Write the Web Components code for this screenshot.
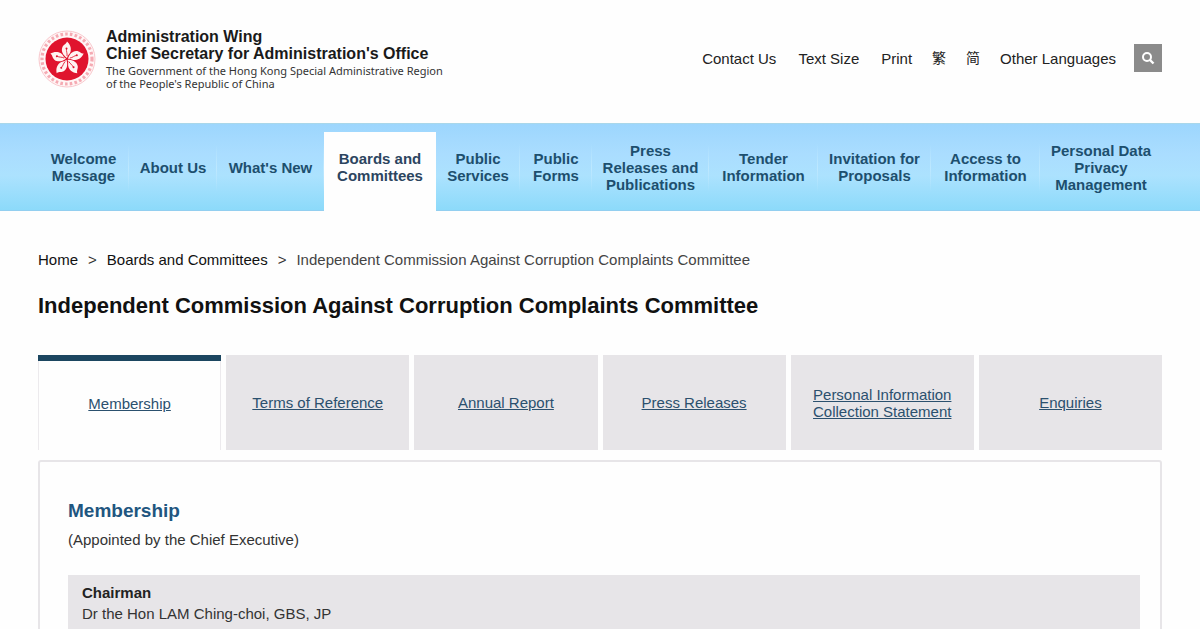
<!DOCTYPE html>
<html lang="en">
<head>
<meta charset="utf-8">
<title>Independent Commission Against Corruption Complaints Committee</title>
<style>
body { margin: 0; background: #fefefe; color: #333; font: 15px/17px "Liberation Sans", "Noto Sans CJK TC", Arial, sans-serif; }
</style>
</head>
<body>
<aw-page></aw-page>

<template id="t-emblem">
<style>
:host { display: block; flex: none; width: 58px; height: 58px; }
svg { display: block; width: 100%; height: 100%; }
</style>
<svg viewBox="0 0 58 58" role="img" aria-label="Regional emblem">
  <circle cx="29" cy="29" r="28" fill="#fff6f6" stroke="#f9c9ce" stroke-width="1"/>
  <circle cx="29" cy="29" r="25" fill="none" stroke="#f5aab3" stroke-width="3.2" stroke-dasharray="2.6 2.2"/>
  <circle cx="29" cy="29" r="21.5" fill="#e0142e"/>
  <defs>
    <g id="petal">
      <path d="M29 28C25.500 25.500 22.800 21.500 24.300 17.500C25.300 14.500 28 14.500 29 11.500C31.800 14 33.600 17.500 32.600 21.500C32 24 29.500 25 29 28Z" fill="#fff4f2"/>
      <path d="M29 26C29.500 23 28 21.500 28.600 18.500" fill="none" stroke="#e0142e" stroke-width=".8"/>
      <circle cx="28.500" cy="18.500" r="1" fill="#e0142e"/>
    </g>
  </defs>
  <use href="#petal"/>
  <use href="#petal" transform="rotate(72 29 29)"/>
  <use href="#petal" transform="rotate(144 29 29)"/>
  <use href="#petal" transform="rotate(216 29 29)"/>
  <use href="#petal" transform="rotate(288 29 29)"/>
</svg>
</template>

<template id="t-header">
<style>
:host { display: flex; align-items: center; justify-content: space-between; box-sizing: border-box; padding: 28px 38px 33px; }
.brand { display: flex; align-items: center; gap: 10px; color: #1a1a1a; text-decoration: none; }
.names { display: grid; }
strong { font-size: 16px; line-height: 17px; }
.gov { font: 11px/13px "Noto Sans", sans-serif; color: #333; }
.names .gov:first-of-type { margin-top: 2px; }
nav { display: flex; align-items: center; gap: 20px; padding-bottom: 2px; }
nav a { color: #222; text-decoration: none; }
.wide { margin-right: 2px; }
[lang] { font-size: 14px; }
button { display: grid; place-items: center; width: 28px; height: 28px; padding: 0; border: 0; background: #8b8b8b; margin-left: -2px; }
svg { width: 14px; height: 14px; display: block; }
</style>
<a class="brand" href="#home">
  <aw-emblem></aw-emblem>
  <span class="names">
    <strong>Administration Wing</strong>
    <strong>Chief Secretary for Administration's Office</strong>
    <span class="gov">The Government of the Hong Kong Special Administrative Region</span>
    <span class="gov">of the People's Republic of China</span>
  </span>
</a>
<nav aria-label="Tools">
  <a class="wide" href="#contact">Contact Us</a>
  <a class="wide" href="#size">Text Size</a>
  <a href="#print">Print</a>
  <a href="#tc" lang="zh-Hant">繁</a>
  <a href="#sc" lang="zh-Hans">简</a>
  <a href="#lang">Other Languages</a>
  <button type="button" aria-label="Search"><svg viewBox="0 0 14 14" fill="none" stroke="#fff" stroke-width="2"><circle cx="6" cy="6" r="4"/><path d="M9 9l3.500 3.500" stroke-width="2.400"/></svg></button>
</nav>
</template>

<template id="t-nav">
<style>
:host { display: block; padding: 8px 38px 0; background: linear-gradient(#9dd6fd, #aaddff 35%, #ace2fe 60%, #8cdafa); border-top: 1px solid #a9d7ea; border-bottom: 1px solid #93cff0; }
nav { display: grid; grid-template-columns: 91fr 88fr 107fr 112fr 84fr 72fr 117fr 109fr 113fr 109fr 122fr; min-height: 78px; }
</style>
<nav aria-label="Main"><slot></slot></nav>
</template>

<template id="t-nav-item">
<style>
:host { display: flex; position: relative; }
a { flex: 1; display: flex; align-items: center; justify-content: center; box-sizing: border-box; padding: 0 10px 8px; text-align: center; font-weight: 700; color: #1d4f6e; text-decoration: none; }
:host(:not([current]):not([last]))::after { content: ""; position: absolute; right: 0; top: 12px; height: 48px; width: 1px; background: linear-gradient(#b5e1ff00, #bde8ff, #b5e1ff00); }
:host([current]) { background: #fefefe; margin-bottom: -1px; }
:host([current]) a { padding-bottom: 9px; color: #2c4560; }
</style>
<a href="#section"><span><slot></slot></span></a>
</template>

<template id="t-crumbs">
<style>
:host { display: block; }
nav { display: flex; flex-wrap: wrap; gap: 10px; }
a { color: #111; text-decoration: none; }
[aria-current] { color: #444; }
</style>
<nav aria-label="Breadcrumb">
  <a href="#home">Home</a><span>&gt;</span>
  <a href="#boards">Boards and Committees</a><span>&gt;</span>
  <span aria-current="page">Independent Commission Against Corruption Complaints Committee</span>
</nav>
</template>

<template id="t-tab">
<style>
:host { display: flex; min-height: 95px; background: #e7e5e8; }
a { flex: 1; display: flex; align-items: center; justify-content: center; padding: 0 16px; text-align: center; color: #2b506e; text-decoration: underline; }
:host([current]) { box-sizing: border-box; border-top: 6px solid #1c4660; background: #fefefe; }
:host([current]) a { padding-bottom: 4px; border: solid #eceaed; border-width: 0 1px; }
</style>
<a href="#tab"><slot></slot></a>
</template>

<template id="t-member">
<style>
:host { display: block; padding: 7px 14px 14px; background: #e7e5e8; line-height: 21px; }
strong, span { display: block; }
strong { color: #222; }
</style>
<strong><slot name="role"></slot></strong>
<span><slot></slot></span>
</template>

<template id="t-page">
<style>
:host { display: block; height: 100vh; overflow: hidden; }
main { padding: 40px 38px 0; }
h1 { margin: 24px 0 0; font-size: 22px; line-height: 28px; color: #111; }
.tabs { display: grid; grid-template-columns: repeat(6, 1fr); gap: 5px; margin-top: 35px; }
section { margin-top: 10px; padding: 38px 20px 30px 28px; border: 2px solid #e7e5e8; border-radius: 3px; }
h2 { margin: 0; font-size: 19px; line-height: 22px; color: #1f5680; }
p { margin: 9px 0 27px; }
</style>
<aw-header></aw-header>
<aw-nav>
  <aw-nav-item>Welcome Message</aw-nav-item>
  <aw-nav-item>About Us</aw-nav-item>
  <aw-nav-item>What's New</aw-nav-item>
  <aw-nav-item current>Boards and Committees</aw-nav-item>
  <aw-nav-item>Public Services</aw-nav-item>
  <aw-nav-item>Public Forms</aw-nav-item>
  <aw-nav-item>Press Releases and Publications</aw-nav-item>
  <aw-nav-item>Tender Information</aw-nav-item>
  <aw-nav-item>Invitation for Proposals</aw-nav-item>
  <aw-nav-item>Access to Information</aw-nav-item>
  <aw-nav-item last>Personal Data Privacy Management</aw-nav-item>
</aw-nav>
<main>
  <aw-crumbs></aw-crumbs>
  <h1>Independent Commission Against Corruption Complaints Committee</h1>
  <div class="tabs">
    <aw-tab current>Membership</aw-tab>
    <aw-tab>Terms of Reference</aw-tab>
    <aw-tab>Annual Report</aw-tab>
    <aw-tab>Press Releases</aw-tab>
    <aw-tab>Personal Information Collection Statement</aw-tab>
    <aw-tab>Enquiries</aw-tab>
  </div>
  <section>
    <h2>Membership</h2>
    <p>(Appointed by the Chief Executive)</p>
    <aw-member><span slot="role">Chairman</span>Dr the Hon LAM Ching-choi, GBS, JP</aw-member>
  </section>
</main>
</template>

<script>
for (const name of ["emblem", "header", "nav", "nav-item", "crumbs", "tab", "member", "page"]) {
  customElements.define("aw-" + name, class extends HTMLElement {
    constructor() {
      super();
      const template = document.getElementById("t-" + name);
      this.attachShadow({ mode: "open" }).append(template.content.cloneNode(true));
    }
  });
}
</script>
</body>
</html>
